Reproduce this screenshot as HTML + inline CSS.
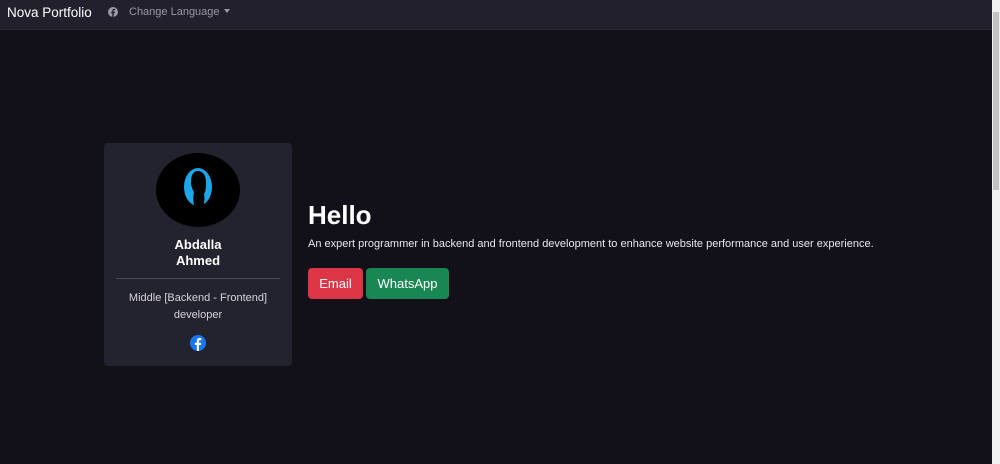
<!DOCTYPE html>
<html><head><style>
*{box-sizing:border-box;margin:0;padding:0}
body{width:1000px;height:464px;overflow:hidden;background:#121119;font-family:"Liberation Sans",sans-serif;color:#fff;position:relative}
.nav{position:absolute;left:0;top:0;width:992px;height:30px;background:#22202d;border-bottom:1px solid #2b2936}
.brand{position:absolute;left:7px;top:5px;font-size:13.5px;color:#fff}
.fbs{position:absolute;left:108px;top:7px}
.lang{position:absolute;left:129px;top:6px;font-size:11px;color:#9a99a3}
.lang:after{content:"";display:inline-block;margin-left:4px;vertical-align:2px;border-left:3px solid transparent;border-right:3px solid transparent;border-top:4px solid #9a99a3}
.sb{position:absolute;left:992px;top:0;width:8px;height:464px;background:#f0f0f0}
.thumb{position:absolute;left:993px;top:12px;width:6px;height:178px;background:#c2c2c2}
.card{position:absolute;left:104px;top:143px;width:188px;height:223px;background:#23222f;border-radius:4px}
.av{position:absolute;left:52px;top:10px;width:84px;height:74px;border-radius:50%;background:#000}
.name{position:absolute;left:0;width:188px;top:94px;text-align:center;font-weight:bold;font-size:13px;line-height:16px}
.hr{position:absolute;left:12px;right:12px;top:135px;height:1px;background:#4a4956}
.role{position:absolute;left:0;width:188px;top:147px;text-align:center;font-size:11px;line-height:17px;color:#d5d4da}
.fb2{position:absolute;left:86px;top:192px}
h1{position:absolute;left:308px;top:200px;font-size:26px;font-weight:bold}
.p{position:absolute;left:308px;top:238px;font-size:11px;color:#e8e8ec}
.btn{position:absolute;top:268px;height:31px;border-radius:4px;font-size:13px;line-height:31px;text-align:center;color:#fff}
</style></head><body>
<div class="nav">
<div class="brand">Nova Portfolio</div>
<svg class="fbs" width="10" height="10" viewBox="0 0 16 16"><circle cx="8" cy="8" r="8" fill="#9a99a3"/><path d="M9 16V10h2l.3-2.3H9V6.3c0-.7.2-1.1 1.1-1.1h1.2V3.1C11 3 10.4 3 9.7 3 8 3 6.8 4 6.8 5.9v1.8H4.9V10h1.9v6z" fill="#22202d"/></svg>
<div class="lang">Change Language</div>
</div>
<div class="sb"></div><div class="thumb"></div>
<div class="card">
<div class="av"><svg width="84" height="74" viewBox="0 0 84 74"><ellipse cx="42" cy="34" rx="14" ry="19" fill="#1ba7e8"/><path d="M42 18c-5 0-7 5-7 11 0 5 2 8 3 10-1 5-1 11 1 16h8c1-4 2-9 1-14 2-3 2-7 2-12 0-6-3-11-8-11z" fill="#000"/></svg></div>
<div class="name">Abdalla<br>Ahmed</div>
<div class="hr"></div>
<div class="role">Middle [Backend - Frontend]<br>developer</div>
<svg class="fb2" width="16" height="16" viewBox="0 0 16 16"><circle cx="8" cy="8" r="8" fill="#1877f2"/><path d="M9 16V10h2l.3-2.3H9V6.3c0-.7.2-1.1 1.1-1.1h1.2V3.1C11 3 10.4 3 9.7 3 8 3 6.8 4 6.8 5.9v1.8H4.9V10h1.9v6z" fill="#fff"/></svg>
</div>
<h1>Hello</h1>
<div class="p">An expert programmer in backend and frontend development to enhance website performance and user experience.</div>
<div class="btn" style="left:308px;width:55px;background:#dc3545">Email</div>
<div class="btn" style="left:366px;width:83px;background:#198754">WhatsApp</div>
</body></html>
